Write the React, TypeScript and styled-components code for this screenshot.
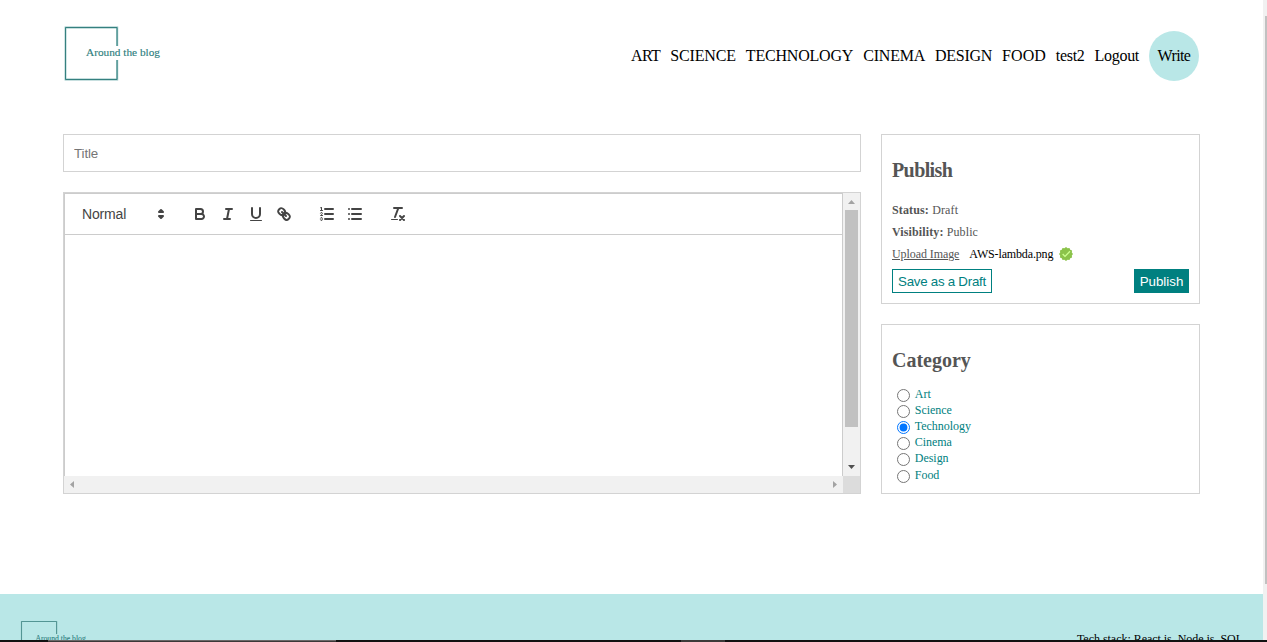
import React, { useState } from 'react';
import styled, { createGlobalStyle } from 'styled-components';
import { FcApproval } from 'react-icons/fc';

const GlobalStyle = createGlobalStyle`
  * { box-sizing: border-box; }
  body {
    margin: 0;
    background: #fff;
    color: #000;
    font-family: "Liberation Serif", "Times New Roman", serif;
    overflow: hidden;
  }
`;

const Shell = styled.div`
  display: grid;
  grid-template-columns: 1fr 4px;
  height: 642px;
  overflow: hidden;
`;

const Page = styled.div`
  display: flex;
  flex-direction: column;
  min-width: 0;
  height: 642px;
  overflow: hidden;
`;

const PageScroll = styled.div`
  background: #f1f1f1;
  padding: 16px 0 0 2px;
`;

const PageThumb = styled.div`
  height: 568px;
  background: #c1c1c1;
`;

const Navbar = styled.header`
  display: flex;
  justify-content: space-between;
  align-items: flex-start;
  height: 134px;
  padding: 26px 64px 0 64px;
  flex: none;
`;

const NavLinks = styled.nav`
  display: flex;
  align-items: center;
  gap: 10px;
  height: 50px;
  margin-top: 5px;
`;

const NavLink = styled.a<{ $spacing?: number }>`
  font-size: 16px;
  line-height: 18px;
  letter-spacing: ${(p) => p.$spacing ?? 0}px;
  white-space: nowrap;
`;

const WriteLink = styled.a`
  display: flex;
  align-items: center;
  justify-content: center;
  width: 50px;
  height: 50px;
  border-radius: 50%;
  background: #b9e7e7;
  font-size: 16px;
  letter-spacing: -0.6px;
`;

const Main = styled.main`
  display: grid;
  grid-template-columns: 798px 319px;
  gap: 20px;
  height: 360px;
  margin-left: 63px;
  flex: none;
`;

const Column = styled.section`
  display: flex;
  flex-direction: column;
  gap: 20px;
`;

const TitleInput = styled.input`
  height: 38px;
  padding: 10px;
  border: 1px solid #d3d3d3;
  outline: none;
  font: 13.33px "Liberation Sans", Arial, sans-serif;
  letter-spacing: -0.1px;
  &::placeholder { color: #757575; }
`;

const EditorFrame = styled.div`
  display: grid;
  grid-template-columns: 1fr 17px;
  grid-template-rows: 1fr 17px;
  height: 302px;
  border: 1px solid #d3d3d3;
`;

const Editor = styled.div`
  display: flex;
  flex-direction: column;
  border: 1px solid #ccc;
  border-bottom: 0;
`;

const Toolbar = styled.div`
  display: flex;
  gap: 15px;
  height: 41px;
  padding: 8px;
  border-bottom: 1px solid #ccc;
`;

const ToolGroup = styled.div`
  display: flex;
`;

const ToolButton = styled.button`
  width: 28px;
  height: 24px;
  padding: 3px 5px;
  border: 0;
  background: none;
  svg { display: block; }
`;

const FormatPicker = styled.div`
  display: flex;
  align-items: center;
  justify-content: space-between;
  width: 98px;
  height: 24px;
  padding: 0 1px 0 9px;
  color: #444;
  font: 14px "Liberation Sans", Arial, sans-serif;
  letter-spacing: -0.15px;
`;

const EditArea = styled.div`
  flex: 1;
`;

const VerticalBar = styled.div`
  display: flex;
  flex-direction: column;
  align-items: center;
  background: #f1f1f1;
`;

const VerticalThumb = styled.div`
  width: 13px;
  height: 217px;
  background: #c1c1c1;
  margin-bottom: auto;
`;

const HorizontalBar = styled.div`
  display: flex;
  justify-content: space-between;
  background: #f1f1f1;
`;

const Corner = styled.div`
  background: #dcdcdc;
`;

const ArrowSvg = styled.svg`
  display: block;
  flex: none;
`;

const Card = styled.div`
  display: flex;
  flex-direction: column;
  height: 170px;
  padding: 10px;
  border: 1px solid #d3d3d3;
  color: #555;
  font-size: 12px;
`;

const CardTitle = styled.h1<{ $spacing?: number }>`
  margin: 14px 0 0;
  font-size: 20px;
  line-height: 23px;
  letter-spacing: ${(p) => p.$spacing ?? 0}px;
`;

const InfoLines = styled.div`
  display: flex;
  flex-direction: column;
  margin-top: 17px;
`;

const InfoLine = styled.div<{ $spacing?: number }>`
  display: flex;
  align-items: center;
  height: 22px;
  letter-spacing: ${(p) => p.$spacing ?? 0}px;
  white-space: pre;
`;

const UploadLabel = styled.label`
  letter-spacing: -0.08px;
  text-decoration: underline;
`;

const FileName = styled.span`
  margin: 0 5px 0 10px;
  color: #000;
  letter-spacing: -0.15px;
`;

const Actions = styled.div`
  display: flex;
  justify-content: space-between;
  margin-top: 4px;
`;

const ActionButton = styled.button<{ $solid?: boolean; $width: number }>`
  width: ${(p) => p.$width}px;
  height: 24px;
  padding: 0;
  border: 1px solid teal;
  background: ${(p) => (p.$solid ? 'teal' : '#fff')};
  color: ${(p) => (p.$solid ? '#fff' : 'teal')};
  font: 13.33px "Liberation Sans", Arial, sans-serif;
  letter-spacing: ${(p) => (p.$solid ? 0 : -0.27)}px;
  white-space: nowrap;
`;

const CategoryList = styled.div`
  display: flex;
  flex-direction: column;
  margin-top: 14px;
`;

const CategoryRow = styled.label`
  display: flex;
  height: 16px;
  color: teal;
  line-height: 16px;
  letter-spacing: -0.04px;
  &:last-child { margin-top: 1px; }
`;

const Radio = styled.input`
  width: 13px;
  height: 13px;
  margin: 3px 4.8px 0 5px;
`;

const Footer = styled.footer`
  display: flex;
  justify-content: space-between;
  align-items: flex-start;
  height: 100px;
  margin-top: 100px;
  padding: 26px 20px 0 20px;
  background: #b9e7e7;
  flex: none;
`;

const FooterText = styled.span`
  margin-top: 11px;
  font-size: 12px;
  line-height: 16px;
  letter-spacing: -0.03px;
  white-space: nowrap;
`;

const BottomStrip = styled.div`
  position: fixed;
  left: 0;
  right: 0;
  bottom: 0;
  height: 2px;
  background:
    linear-gradient(#6b6868, #6b6868) 48px 0 / 288px 1px no-repeat,
    linear-gradient(#3c3838, #3c3838) 48px 1px / 288px 1px no-repeat,
    linear-gradient(#3c3a39, #3c3a39) 681px 0 / 44px 2px no-repeat,
    #121111;
`;

const LogoSvg = styled.svg`
  display: block;
  overflow: visible;
`;

function Logo({ size, inset = 0 }: { size: number; inset?: number }) {
  return (
    <LogoSvg width={size} height={size * 0.56} viewBox={`${-inset} ${-inset} 100 56`}>
      <path d="M53.3 20V1.5H1.5V53.5H53.3V34" fill="none" stroke="#8fc0c0" strokeWidth="1.8" />
      <path d="M53 20V1.5H1.5V53.5H53V34" fill="none" stroke="#35807f" strokeWidth="1" />
      <text
        x="22"
        y="30.4"
        fontSize="11.3"
        textLength="74"
        fill="#2f7f80"
        stroke="#2f7f80"
        strokeWidth="0.15"
        fontFamily="'Liberation Serif', serif"
      >
        Around the blog
      </text>
    </LogoSvg>
  );
}

type Tool = 'bold' | 'italic' | 'underline' | 'link' | 'ordered' | 'bullet' | 'clean' | 'picker';

const glyphs: Record<Tool, React.ReactNode> = {
  bold: (
    <>
      <path d="M5,4H9.5A2.5,2.5,0,0,1,12,6.5v0A2.5,2.5,0,0,1,9.5,9H5Z" />
      <path d="M5,9h5.5A2.5,2.5,0,0,1,13,11.5v0A2.5,2.5,0,0,1,10.5,14H5Z" />
    </>
  ),
  italic: <path d="M7,4H13M5,14H11M8,14L10,4" />,
  underline: (
    <>
      <path d="M5,3V9a4.012,4.012,0,0,0,4,4H9a4.012,4.012,0,0,0,4-4V3" />
      <rect x="3" y="15" width="12" height="1" rx="0.5" fill="#444" stroke="none" />
    </>
  ),
  link: (
    <>
      <path d="M7,7L11,11" />
      <path d="M8.9,4.577a3.476,3.476,0,0,1,.36,4.679A3.476,3.476,0,0,1,4.577,8.9C3.185,7.5,2.035,6.4,4.217,4.217S7.5,3.185,8.9,4.577Z" />
      <path d="M13.423,9.1a3.476,3.476,0,0,0-4.679-.36,3.476,3.476,0,0,0,.36,4.679c1.392,1.392,2.5,2.542,4.679.36S14.815,10.5,13.423,9.1Z" />
    </>
  ),
  ordered: (
    <>
      <path d="M7,4H15M7,9H15M7,14H15" />
      <path d="M2.5,5.5H4.5" strokeWidth="1" />
      <path
        d="M3.5,6A0.5,0.5,0,0,1,3,5.5V3.085l-0.276.138A0.5,0.5,0,0,1,2.053,3c-0.124-.247-0.023-0.324.224-0.447l1-.5A0.5,0.5,0,0,1,4,2.5v3A0.5,0.5,0,0,1,3.5,6Z"
        fill="#444"
        stroke="none"
      />
      <path d="M4.5,10.5h-2c0-.234,1.85-1.076,1.85-2.234A0.959,0.959,0,0,0,2.5,8.156" strokeWidth="1" />
      <path
        d="M2.5,14.846a0.959,0.959,0,0,0,1.85-.109A0.7,0.7,0,0,0,3.75,14a0.688,0.688,0,0,0,.6-0.736,0.959,0.959,0,0,0-1.85-.109"
        strokeWidth="1"
      />
    </>
  ),
  bullet: <path d="M6,4H15M6,9H15M6,14H15M3,4H3M3,9H3M3,14H3" />,
  clean: (
    <>
      <path d="M5,3H13M6,12L9.35,3M11,11L15,15M15,11L11,15" />
      <rect x="2" y="14" width="7" height="1" rx="0.5" fill="#444" stroke="none" />
    </>
  ),
  picker: <path d="M7,11L9,13L11,11ZM7,7L9,5L11,7Z" fill="#444" />,
};

function Glyph({ name }: { name: Tool }) {
  return (
    <svg
      width="18"
      height="18"
      viewBox="0 0 18 18"
      fill="none"
      stroke="#444"
      strokeWidth="2"
      strokeLinecap="round"
      strokeLinejoin="round"
    >
      {glyphs[name]}
    </svg>
  );
}

function Arrow({ points, color }: { points: string; color: string }) {
  return (
    <ArrowSvg width="17" height="17" viewBox="0 0 17 17">
      <polygon points={points} fill={color} />
    </ArrowSvg>
  );
}

const toolGroups: Tool[][] = [['bold', 'italic', 'underline', 'link'], ['ordered', 'bullet'], ['clean']];

const links: { label: string; spacing?: number }[] = [
  { label: 'ART', spacing: -0.6 },
  { label: 'SCIENCE', spacing: -0.15 },
  { label: 'TECHNOLOGY', spacing: -0.2 },
  { label: 'CINEMA', spacing: -0.2 },
  { label: 'DESIGN', spacing: -0.28 },
  { label: 'FOOD', spacing: 0.05 },
  { label: 'test2', spacing: -0.3 },
  { label: 'Logout', spacing: -0.3 },
];

const categories = ['Art', 'Science', 'Technology', 'Cinema', 'Design', 'Food'];

export default function App() {
  const [category, setCategory] = useState('Technology');

  return (
    <>
      <GlobalStyle />
      <Shell>
        <Page>
          <Navbar>
            <Logo size={100} />
            <NavLinks>
              {links.map((l) => (
                <NavLink key={l.label} $spacing={l.spacing}>
                  {l.label}
                </NavLink>
              ))}
              <WriteLink>Write</WriteLink>
            </NavLinks>
          </Navbar>
          <Main>
            <Column>
              <TitleInput placeholder="Title" />
              <EditorFrame>
                <Editor>
                  <Toolbar>
                    <FormatPicker>
                      Normal
                      <Glyph name="picker" />
                    </FormatPicker>
                    {toolGroups.map((group) => (
                      <ToolGroup key={group[0]}>
                        {group.map((tool) => (
                          <ToolButton key={tool} aria-label={tool}>
                            <Glyph name={tool} />
                          </ToolButton>
                        ))}
                      </ToolGroup>
                    ))}
                  </Toolbar>
                  <EditArea />
                </Editor>
                <VerticalBar>
                  <Arrow points="5,11 8.5,7 12,11" color="#a3a3a3" />
                  <VerticalThumb />
                  <Arrow points="5,6 12,6 8.5,10" color="#505050" />
                </VerticalBar>
                <HorizontalBar>
                  <Arrow points="10,5 10,12 6,8.5" color="#a3a3a3" />
                  <Arrow points="7,5 7,12 11,8.5" color="#a3a3a3" />
                </HorizontalBar>
                <Corner />
              </EditorFrame>
            </Column>
            <Column>
              <Card>
                <CardTitle $spacing={-0.6}>Publish</CardTitle>
                <InfoLines>
                  <InfoLine $spacing={0.14}>
                    <b>Status:</b> Draft
                  </InfoLine>
                  <InfoLine $spacing={0.12}>
                    <b>Visibility:</b> Public
                  </InfoLine>
                  <InfoLine>
                    <UploadLabel>Upload Image</UploadLabel>
                    <FileName>AWS-lambda.png</FileName>
                    <FcApproval size={16} />
                  </InfoLine>
                </InfoLines>
                <Actions>
                  <ActionButton $width={100}>Save as a Draft</ActionButton>
                  <ActionButton $width={55} $solid>
                    Publish
                  </ActionButton>
                </Actions>
              </Card>
              <Card>
                <CardTitle>Category</CardTitle>
                <CategoryList>
                  {categories.map((name) => (
                    <CategoryRow key={name}>
                      <Radio
                        type="radio"
                        name="category"
                        checked={category === name}
                        onChange={() => setCategory(name)}
                      />
                      {name}
                    </CategoryRow>
                  ))}
                </CategoryList>
              </Card>
            </Column>
          </Main>
          <Footer>
            <Logo size={68} inset={0.7} />
            <FooterText>Tech stack: React.js, Node.js, SQL</FooterText>
          </Footer>
        </Page>
        <PageScroll>
          <PageThumb />
        </PageScroll>
      </Shell>
      <BottomStrip />
    </>
  );
}
